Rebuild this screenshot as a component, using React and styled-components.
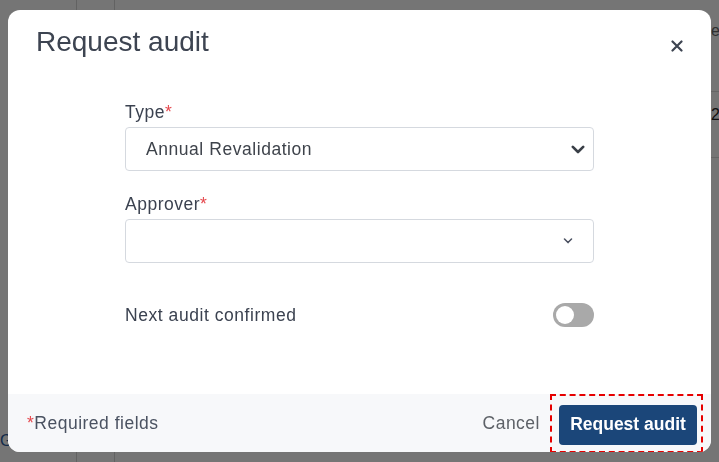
import styled, { createGlobalStyle } from "styled-components";
import { useState } from "react";

const GlobalStyle = createGlobalStyle`
    html, body {
        margin: 0;
        padding: 0;
        width: 100%;
        height: 100%;
        overflow: hidden;
    }
    body {
        font-family: "Liberation Sans", Arial, sans-serif;
        background: #fff;
    }
    * {
        box-sizing: border-box;
    }
`;

// page that sits behind the modal
const Page = styled.div`
    display: flex;
    width: 100vw;
    height: 100vh;
    background: #fff;
`;

const Sidebar = styled.div`
    width: 77px;
    flex-shrink: 0;
    border-right: 1px solid #d6d6d6;
    display: flex;
    flex-direction: column;
    justify-content: flex-end;
    padding: 0 0 12px 0;
    font-size: 16px;
    color: #2a5aa0;
`;

const Rail = styled.div`
    width: 38px;
    flex-shrink: 0;
    border-right: 1px solid #d6d6d6;
`;

const Main = styled.div`
    flex: 1;
    display: flex;
    flex-direction: column;
    align-items: stretch;
    overflow: hidden;
`;

const TableRow = styled.div`
    display: flex;
    justify-content: flex-end;
    align-items: center;
    height: ${(p) => p.h}px;
    border-bottom: 1px solid #dcdcdc;
    font-size: 16px;
    color: ${(p) => (p.head ? "#666" : "#222")};
    white-space: nowrap;
`;

const Cell = styled.span`
    width: 8px;
    overflow: hidden;
    margin-top: ${(p) => p.shift || 0}px;
`;

// modal
const Backdrop = styled.div`
    position: fixed;
    inset: 0;
    background: rgba(0, 0, 0, 0.54);
    display: flex;
    align-items: center;
    justify-content: center;
`;

const Dialog = styled.div`
    width: 703px;
    height: 442px;
    background: #fff;
    border-radius: 12px;
    display: flex;
    flex-direction: column;
    overflow: hidden;
`;

const Header = styled.div`
    display: flex;
    justify-content: space-between;
    align-items: flex-start;
    padding: 15px 22px 0 28px;
`;

const Title = styled.h2`
    margin: 0;
    font-size: 28px;
    line-height: 34px;
    font-weight: 400;
    color: #3d4451;
`;

const CloseButton = styled.button`
    width: 24px;
    height: 24px;
    margin-top: 9px;
    padding: 0;
    border: none;
    background: none;
    display: flex;
    align-items: center;
    justify-content: center;
    cursor: pointer;
`;

const Body = styled.div`
    flex: 1;
    display: flex;
    flex-direction: column;
    align-items: center;
    padding-top: 43px;
`;

const Form = styled.div`
    width: 469px;
    display: flex;
    flex-direction: column;
`;

const Field = styled.div`
    display: flex;
    flex-direction: column;
    gap: 5px;
    margin-bottom: ${(p) => p.mb || 0}px;
`;

const Label = styled.label`
    font-size: 17.5px;
    line-height: 20px;
    letter-spacing: 0.5px;
    color: #3b4250;
`;

const Star = styled.span`
    color: #e5484d;
`;

const SelectBox = styled.div`
    height: 44px;
    border: 1px solid #d5d9df;
    border-radius: 4px;
    display: flex;
    align-items: center;
    justify-content: space-between;
    padding: 0 ${(p) => p.pr}px 0 20px;
    font-size: 17.5px;
    letter-spacing: 0.55px;
    color: #3e434b;
    background: #fff;
`;

const ToggleRow = styled.div`
    display: flex;
    align-items: center;
    justify-content: space-between;
    height: 24px;
    font-size: 17.5px;
    letter-spacing: 0.55px;
    color: #3b4250;
`;

const Switch = styled.button`
    width: 41px;
    height: 24px;
    padding: 3px;
    border: none;
    border-radius: 12px;
    background: ${(p) => (p.on ? "#1b4679" : "#a9a9a9")};
    display: flex;
    justify-content: ${(p) => (p.on ? "flex-end" : "flex-start")};
    align-items: center;
    cursor: pointer;
`;

const Knob = styled.span`
    width: 18px;
    height: 18px;
    border-radius: 50%;
    background: #fff;
`;

const Footer = styled.div`
    height: 58px;
    flex-shrink: 0;
    background: #f7f8fa;
    display: flex;
    align-items: center;
    justify-content: space-between;
    padding: 0 8px 0 19px;
`;

const FooterNote = styled.span`
    font-size: 17.5px;
    letter-spacing: 0.5px;
    color: #4a5261;
`;

const Actions = styled.div`
    display: flex;
    align-items: center;
    gap: 10px;
`;

const TextButton = styled.button`
    border: none;
    background: none;
    padding: 0;
    font-family: inherit;
    font-size: 17.5px;
    letter-spacing: 0.5px;
    color: #5d6167;
    cursor: pointer;
`;

const Highlight = styled.div`
    border: 2px dashed #e60000;
    padding: 9px 4px 6px 7px;
    display: flex;
`;

const PrimaryButton = styled.button`
    width: 138px;
    height: 40px;
    border: none;
    border-radius: 4px;
    background: #1b4679;
    color: #fff;
    font-family: inherit;
    font-size: 17.5px;
    font-weight: 700;
    cursor: pointer;
`;

function Chevron({ bold }) {
    if (bold) {
        return (
            <svg width="14" height="9" viewBox="0 0 14 9">
                <polyline points="1.8,1.8 7,7 12.2,1.8" fill="none" stroke="#3a3f47" strokeWidth="2.6" strokeLinecap="round" strokeLinejoin="round" />
            </svg>
        );
    }
    return (
        <svg width="10" height="6" viewBox="0 0 10 6">
            <polyline points="1.5,1 5,4.6 8.5,1" fill="none" stroke="#4a5060" strokeWidth="1.5" strokeLinecap="round" strokeLinejoin="round" />
        </svg>
    );
}

function App() {
    const [confirmed, setConfirmed] = useState(false);

    return (
        <>
            <GlobalStyle />
            <Page>
                <Sidebar>G</Sidebar>
                <Rail />
                <Main>
                    <TableRow h={92} head>
                        <Cell shift={-30}>e</Cell>
                    </TableRow>
                    <TableRow h={66}>
                        <Cell shift={-20}>2</Cell>
                    </TableRow>
                </Main>
            </Page>
            <Backdrop>
                <Dialog>
                    <Header>
                        <Title>Request audit</Title>
                        <CloseButton aria-label="Close">
                            <svg width="12" height="12" viewBox="0 0 12 12">
                                <path d="M1.5 1.5 L10.5 10.5 M10.5 1.5 L1.5 10.5" stroke="#3d4451" strokeWidth="2.2" strokeLinecap="round" />
                            </svg>
                        </CloseButton>
                    </Header>
                    <Body>
                        <Form>
                            <Field mb={23}>
                                <Label>Type<Star>*</Star></Label>
                                <SelectBox pr={8}>
                                    Annual Revalidation
                                    <Chevron bold />
                                </SelectBox>
                            </Field>
                            <Field mb={40}>
                                <Label>Approver<Star>*</Star></Label>
                                <SelectBox pr={20}>
                                    <span />
                                    <Chevron />
                                </SelectBox>
                            </Field>
                            <ToggleRow>
                                Next audit confirmed
                                <Switch on={confirmed ? 1 : 0} onClick={() => setConfirmed(!confirmed)}>
                                    <Knob />
                                </Switch>
                            </ToggleRow>
                        </Form>
                    </Body>
                    <Footer>
                        <FooterNote><Star>*</Star>Required fields</FooterNote>
                        <Actions>
                            <TextButton>Cancel</TextButton>
                            <Highlight>
                                <PrimaryButton>Request audit</PrimaryButton>
                            </Highlight>
                        </Actions>
                    </Footer>
                </Dialog>
            </Backdrop>
        </>
    );
}

export default App;
